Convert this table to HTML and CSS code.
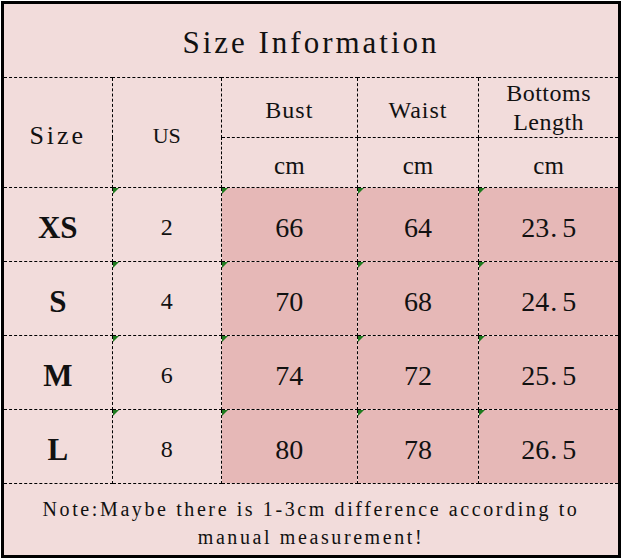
FILE: index.html
```html
<!DOCTYPE html>
<html>
<head>
<meta charset="utf-8">
<link rel="stylesheet" href="styles.css">
</head>
<body>
<table class="chart">
  <colgroup>
    <col class="c1"><col class="c2"><col class="c3"><col class="c4"><col class="c5">
  </colgroup>
  <tr class="r-title">
    <td colspan="5" class="title">Size Information</td>
  </tr>
  <tr class="r-head1">
    <td rowspan="2" class="head big">Size</td>
    <td rowspan="2" class="head us">US</td>
    <td class="head">Bust</td>
    <td class="head">Waist</td>
    <td class="head wrap">Bottoms Length</td>
  </tr>
  <tr class="r-head2">
    <td class="head cm">cm</td>
    <td class="head cm">cm</td>
    <td class="head cm">cm</td>
  </tr>
  <tr class="r-data">
    <td class="sz">XS</td>
    <td class="num mark">2</td>
    <td class="val mark">66</td>
    <td class="val mark">64</td>
    <td class="val mark">23<span class="dot">.</span>5</td>
  </tr>
  <tr class="r-data">
    <td class="sz">S</td>
    <td class="num mark">4</td>
    <td class="val mark">70</td>
    <td class="val mark">68</td>
    <td class="val mark">24<span class="dot">.</span>5</td>
  </tr>
  <tr class="r-data">
    <td class="sz">M</td>
    <td class="num mark">6</td>
    <td class="val mark">74</td>
    <td class="val mark">72</td>
    <td class="val mark">25<span class="dot">.</span>5</td>
  </tr>
  <tr class="r-data">
    <td class="sz">L</td>
    <td class="num mark">8</td>
    <td class="val mark">80</td>
    <td class="val mark">78</td>
    <td class="val mark">26<span class="dot">.</span>5</td>
  </tr>
  <tr class="r-note">
    <td colspan="5" class="note">Note:Maybe there is 1-3cm difference according to manual measurement!</td>
  </tr>
</table>
</body>
</html>
```
FILE: styles.css
```css
html, body {
  margin: 0;
  padding: 0;
  background: #ffffff;
}

body {
  padding: 1px 0 0 1px;
}

.chart {
  border-collapse: collapse;
  table-layout: fixed;
  width: 620px;
  border: 3px solid #000;
  color: #111;
  background: #f2dcdb;
}

.c1 { width: 109px; }
.c2 { width: 109px; }
.c3 { width: 135px; }
.c4 { width: 121px; }
.c5 { width: 140px; }

.chart td {
  border: 1px dashed #000;
  text-align: center;
  vertical-align: middle;
  padding: 0;
  position: relative;
  font-family: "Liberation Serif", serif;
}

.r-title { height: 75px; }
.r-head1 { height: 60px; }
.r-head2 { height: 50px; }
.r-data { height: 74px; }
.r-note { height: 73px; }

.title {
  font-size: 31px;
  letter-spacing: 3px;
  padding-top: 5px !important;
}

.head {
  font-size: 24px;
  letter-spacing: 1px;
  line-height: 29px;
  padding-top: 6px !important;
}

.head.big {
  font-size: 26px;
  letter-spacing: 3px;
}

.head.us {
  font-size: 22px;
  letter-spacing: 0;
}

.head.cm {
  font-size: 25px;
  letter-spacing: 0;
}

.head.wrap {
  padding: 0 16px !important;
  line-height: 29px;
  letter-spacing: 0.5px;
}

.sz {
  font-size: 31px;
  font-weight: bold;
  padding-top: 6px !important;
}

.num {
  font-size: 24px;
  padding-top: 6px !important;
}

.val {
  font-size: 28px;
  background: #e6b8b7;
  padding-top: 6px !important;
}

.dot {
  margin: 0 5px 0 1px;
}

.mark::before {
  content: "";
  position: absolute;
  left: 0;
  top: 0;
  width: 0;
  height: 0;
  border-top: 6px solid #1f7a1f;
  border-right: 6px solid transparent;
}

.note {
  font-size: 20px;
  line-height: 28px;
  letter-spacing: 2.6px;
  padding: 6px 20px 0 !important;
}
```
